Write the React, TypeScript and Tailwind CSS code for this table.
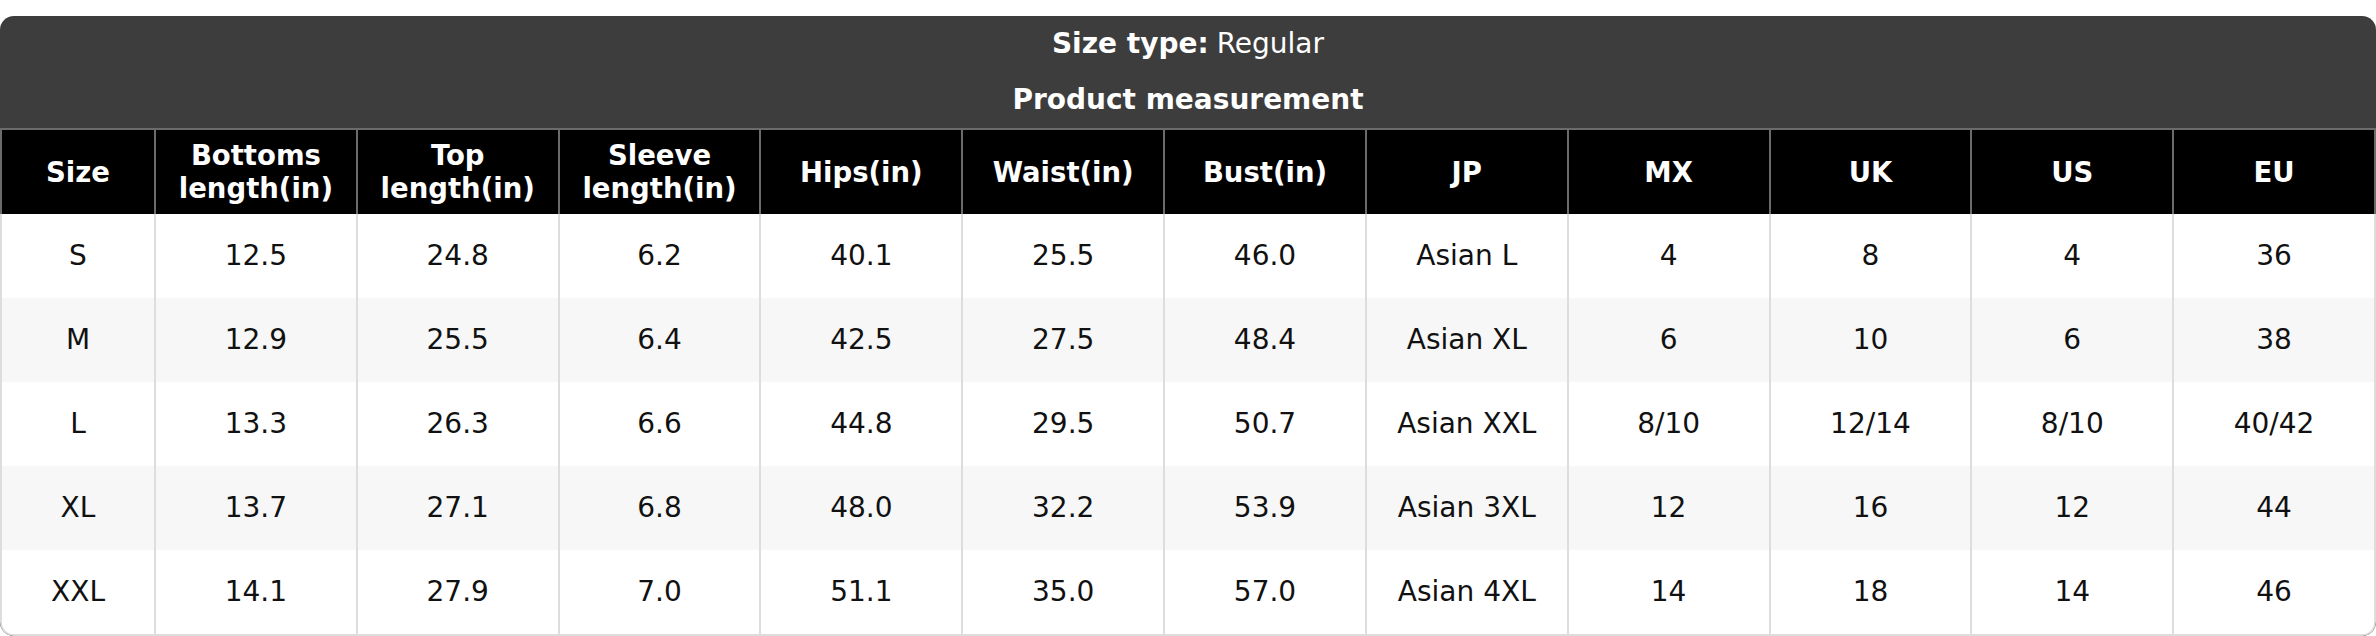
const headers = [
  'Size',
  'Bottoms length(in)',
  'Top length(in)',
  'Sleeve length(in)',
  'Hips(in)',
  'Waist(in)',
  'Bust(in)',
  'JP',
  'MX',
  'UK',
  'US',
  'EU',
];

const rows = [
  ['S', '12.5', '24.8', '6.2', '40.1', '25.5', '46.0', 'Asian L', '4', '8', '4', '36'],
  ['M', '12.9', '25.5', '6.4', '42.5', '27.5', '48.4', 'Asian XL', '6', '10', '6', '38'],
  ['L', '13.3', '26.3', '6.6', '44.8', '29.5', '50.7', 'Asian XXL', '8/10', '12/14', '8/10', '40/42'],
  ['XL', '13.7', '27.1', '6.8', '48.0', '32.2', '53.9', 'Asian 3XL', '12', '16', '12', '44'],
  ['XXL', '14.1', '27.9', '7.0', '51.1', '35.0', '57.0', 'Asian 4XL', '14', '18', '14', '46'],
];

export default function App() {
  return (
    <div className="bg-white pt-4 font-['DejaVu_Sans',sans-serif]">
      <div className="rounded-[14px] overflow-hidden bg-[#3d3d3d]">
        <div className="h-[56px] flex items-center justify-center text-[28px] text-white">
          <span className="font-bold">Size type:</span>
          <span className="ml-[8px]">Regular</span>
        </div>
        <div className="h-[56px] flex items-center justify-center text-[28px] font-bold text-white">
          Product measurement
        </div>

        {/* header row */}
        <div className="grid grid-cols-[152px_repeat(11,minmax(0,1fr))] bg-black border-t-2 border-x-2 border-[#6b6b6b]">
          {headers.map((h, idx) => (
            <div
              key={h}
              className={`h-[84px] flex items-center justify-center text-center text-[27.5px] leading-[1.2] font-bold text-white px-2 ${
                idx > 0 ? 'border-l-2 border-[#6b6b6b]' : ''
              }`}
            >
              {h}
            </div>
          ))}
        </div>

        {/* body */}
        <div className="bg-white border-x-2 border-b-2 border-[#dddddd] rounded-b-[14px] overflow-hidden">
          {rows.map((row, rIdx) => (
            <div
              key={row[0]}
              className={`grid grid-cols-[152px_repeat(11,minmax(0,1fr))] ${
                rIdx % 2 === 1 ? 'bg-[#f7f7f7]' : 'bg-white'
              }`}
            >
              {row.map((cell, cIdx) => (
                <div
                  key={cIdx}
                  className={`h-[84px] flex items-center justify-center text-[28px] text-[#111111] ${
                    cIdx > 0 ? 'border-l-2 border-[#dddddd]' : ''
                  }`}
                >
                  {cell}
                </div>
              ))}
            </div>
          ))}
        </div>
      </div>
    </div>
  );
}
